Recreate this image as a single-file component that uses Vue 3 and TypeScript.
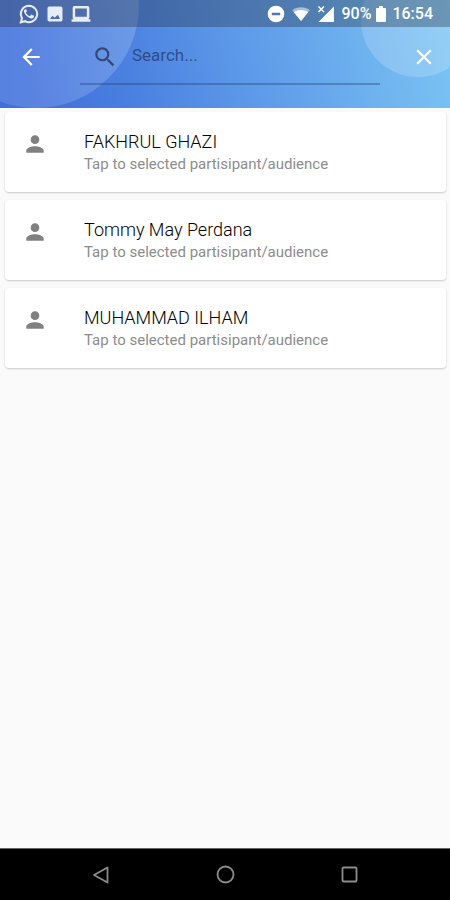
<script setup lang="ts">
import { ref } from 'vue'

interface Participant {
  id: number
  name: string
}

const query = ref('')
const participants: Participant[] = [
  { id: 1, name: 'FAKHRUL GHAZI' },
  { id: 2, name: 'Tommy May Perdana' },
  { id: 3, name: 'MUHAMMAD ILHAM' },
]
</script>

<template>
  <div class="screen">
    <header class="header">
      <span class="bubble bubble-left"></span>
      <span class="bubble bubble-right"></span>

      <div class="status">
        <div class="status-group notices">
          <svg width="20" height="20" viewBox="0 0 24 24" aria-hidden="true">
            <path d="M12 2.200a9.800 9.800 0 0 0-8.400 14.800L2.200 22l5.100-1.400A9.800 9.800 0 1 0 12 2.200z" fill="none" stroke="currentColor" stroke-width="2.400" />
            <path fill="currentColor" d="M8.900 6.800c-.3-.6-.5-.6-.8-.6-.7 0-1.300.3-1.700 1-.5.8-.6 1.900-.1 3.100.6 1.500 1.700 3.100 3.300 4.500 1.700 1.500 3.600 2.500 5.200 2.600 1.300.1 2.800-.8 3.100-1.900.2-.7.200-1.200 0-1.400l-2.500-1.300c-.4-.2-.7-.1-1 .3l-.9 1.100c-.2.300-.5.300-.9.100-1.900-.8-3.200-2-4.100-3.600-.2-.4-.1-.6.100-.8l.7-.9c.2-.3.200-.5.100-.8z" />
          </svg>
          <svg width="20" height="20" viewBox="0 0 24 24" aria-hidden="true">
            <path fill="currentColor" d="M21 19V5a2 2 0 0 0-2-2H5a2 2 0 0 0-2 2v14a2 2 0 0 0 2 2h14a2 2 0 0 0 2-2zM6 18l3-4 2.500 2.500L15.500 13 18 18z" />
          </svg>
          <svg width="20" height="20" viewBox="0 0 24 24" aria-hidden="true">
            <path fill="currentColor" d="M20.500 18.200a2 2 0 0 0 1.500-2V4.500a2 2 0 0 0-2-2H4a2 2 0 0 0-2 2v11.700a2 2 0 0 0 1.500 2H.7v3h22.600v-3zM5 5.500h14v9.700H5z" />
          </svg>
        </div>
        <div class="status-group system">
          <svg width="20" height="20" viewBox="0 0 24 24" aria-hidden="true">
            <path fill="currentColor" d="M12 2a10 10 0 1 0 0 20 10 10 0 0 0 0-20zm5 11.500H7v-3h10z" />
          </svg>
          <svg width="20" height="20" viewBox="0 0 24 24" aria-hidden="true">
            <path fill="currentColor" opacity=".5" d="M12 20.500 1.500 7.500C4.500 5 8 4 12 4s7.500 1 10.500 3.500z" />
            <path fill="currentColor" d="M12 20.500 3.500 10C6 8 9 7.200 12 7.200s6 .8 8.500 2.800z" />
          </svg>
          <svg width="20" height="20" viewBox="0 0 24 24" aria-hidden="true">
            <path fill="currentColor" d="M21.500 3v18.500H3L11 13.500 13.500 11z" />
            <path d="M3 3l6.500 6.500M9.500 3 3 9.500" fill="none" stroke="currentColor" stroke-width="1.800" />
          </svg>
          <span>90%</span>
          <svg width="10" height="16" viewBox="0 0 10 16" aria-hidden="true">
            <path fill="currentColor" d="M3 0h4v2h2a1 1 0 0 1 1 1v12a1 1 0 0 1-1 1H1a1 1 0 0 1-1-1V3a1 1 0 0 1 1-1h2z" />
          </svg>
          <span class="clock">16:54</span>
        </div>
      </div>

      <div class="toolbar">
        <button class="icon-button" type="button" aria-label="Back">
          <svg width="26" height="26" viewBox="0 0 24 24" aria-hidden="true">
            <path fill="currentColor" d="M20 11H7.830l5.590-5.590L12 4l-8 8 8 8 1.410-1.410L7.830 13H20z" />
          </svg>
        </button>
        <label class="search">
          <svg width="26" height="26" viewBox="0 0 24 24" aria-hidden="true">
            <path fill="currentColor" d="M15.500 14h-.79l-.28-.27A6.470 6.470 0 0 0 16 9.500 6.500 6.500 0 1 0 9.500 16c1.610 0 3.090-.59 4.230-1.570l.27.28v.79l5 4.990L20.490 19zm-6 0C7.010 14 5 11.990 5 9.500S7.010 5 9.500 5 14 7.010 14 9.500 11.990 14 9.500 14z" />
          </svg>
          <input v-model="query" type="text" placeholder="Search..." aria-label="Search" />
        </label>
        <button class="icon-button" type="button" aria-label="Close">
          <svg width="26" height="26" viewBox="0 0 24 24" aria-hidden="true">
            <path fill="currentColor" d="M19 6.410 17.590 5 12 10.590 6.410 5 5 6.410 10.590 12 5 17.590 6.410 19 12 13.410 17.590 19 19 17.590 13.410 12z" />
          </svg>
        </button>
      </div>
    </header>

    <main class="list">
      <button v-for="person in participants" :key="person.id" class="card" type="button">
        <svg class="avatar" width="26" height="26" viewBox="0 0 24 24" aria-hidden="true">
          <path fill="currentColor" d="M12 12c2.210 0 4-1.790 4-4s-1.790-4-4-4-4 1.790-4 4 1.790 4 4 4zm0 2c-2.670 0-8 1.340-8 4v2h16v-2c0-2.660-5.330-4-8-4z" />
        </svg>
        <span class="texts">
          <span class="name">{{ person.name }}</span>
          <span class="hint">Tap to selected partisipant/audience</span>
        </span>
      </button>
    </main>

    <nav class="navbar" aria-label="System">
      <button class="nav-button" type="button" aria-label="Back">
        <svg width="20" height="20" viewBox="0 0 20 20" aria-hidden="true">
          <path d="M16.500 2.500v15L3 10z" fill="none" stroke="currentColor" stroke-width="1.800" stroke-linejoin="round" />
        </svg>
      </button>
      <button class="nav-button" type="button" aria-label="Home">
        <svg width="20" height="20" viewBox="0 0 20 20" aria-hidden="true">
          <circle cx="10.500" cy="9.500" r="8" fill="none" stroke="currentColor" stroke-width="1.800" />
        </svg>
      </button>
      <button class="nav-button" type="button" aria-label="Recent apps">
        <svg width="20" height="20" viewBox="0 0 20 20" aria-hidden="true">
          <rect x="3.500" y="2.500" width="14" height="14" rx="1" fill="none" stroke="currentColor" stroke-width="1.800" />
        </svg>
      </button>
    </nav>
  </div>
</template>

<style>
body {
  background: #fafafa;
}
</style>

<style scoped>
.screen {
  display: flex;
  flex-direction: column;
  min-height: 100vh;
  font-family: Roboto, "Liberation Sans", sans-serif;
  background: #fafafa;
}

button {
  border: 0;
  padding: 0;
  margin: 0;
  background: none;
  font: inherit;
  color: inherit;
  cursor: pointer;
}

svg {
  display: block;
  flex: none;
}

.header {
  position: relative;
  overflow: hidden;
  color: #fff;
  background: linear-gradient(75deg, #4070dc 8%, #4a80e0 28%, #5c98e8 52%, #6cafee 76%, #7cc6f4 100%);
}

.bubble {
  position: absolute;
  border-radius: 50%;
}

.bubble-left {
  left: -67px;
  top: -98px;
  width: 206px;
  height: 206px;
  background: linear-gradient(90deg, rgba(255, 255, 255, 0.12) 30%, rgba(255, 255, 255, 0.18));
}

.bubble-right {
  right: -25px;
  top: -37px;
  width: 114px;
  height: 114px;
  background: rgba(255, 255, 255, 0.18);
}

.status {
  position: relative;
  display: flex;
  align-items: center;
  justify-content: space-between;
  height: 27px;
  padding: 0 17px 0 19px;
  background: rgba(40, 50, 70, 0.36);
}

.status-group {
  display: flex;
  align-items: center;
}

.notices {
  gap: 6px;
  color: #e6ecf8;
}

.system {
  gap: 5px;
  font-size: 16px;
  font-weight: 500;
}

.clock {
  margin-left: 1px;
}

.toolbar {
  position: relative;
  display: flex;
  align-items: flex-start;
  justify-content: space-between;
  height: 81px;
  padding: 0 13px 0 18px;
}

.icon-button {
  display: flex;
  align-items: center;
  justify-content: center;
  height: 60px;
}

.search {
  display: flex;
  align-items: center;
  gap: 14px;
  flex: 1;
  box-sizing: border-box;
  height: 58px;
  margin: 0 31px 0 36px;
  padding: 4px 0 0 12px;
  border-bottom: 2px solid rgba(30, 60, 110, 0.36);
  color: rgba(30, 42, 66, 0.7);
}

.search input {
  flex: 1;
  min-width: 0;
  border: 0;
  padding: 0 0 4px;
  outline: 0;
  background: none;
  font: inherit;
  font-size: 17px;
  color: inherit;
}

.search input::placeholder {
  color: rgba(25, 42, 75, 0.64);
  opacity: 1;
}

.list {
  display: flex;
  flex-direction: column;
  flex: 1;
  gap: 8px;
  padding: 4px 4px 4px 5px;
}

.card {
  display: flex;
  align-items: flex-start;
  gap: 36px;
  padding: 19px 17px 17px;
  border-radius: 4px;
  background: #fff;
  box-shadow: 0 1px 2px rgba(0, 0, 0, 0.2);
  text-align: left;
}

.avatar {
  color: #808080;
}

.texts {
  display: flex;
  flex-direction: column;
}

.name,
.hint {
  line-height: 22px;
}

.name {
  font-size: 18px;
  font-weight: 300;
  color: #000;
}

.hint {
  font-size: 15px;
  color: #8c8c8c;
}

.navbar {
  display: flex;
  justify-content: center;
  gap: 84px;
  height: 51px;
  border-top: 1px solid #666;
  background: #000;
  color: #8c8c8c;
}

.nav-button {
  display: flex;
  align-items: center;
  justify-content: center;
  width: 40px;
}
</style>
